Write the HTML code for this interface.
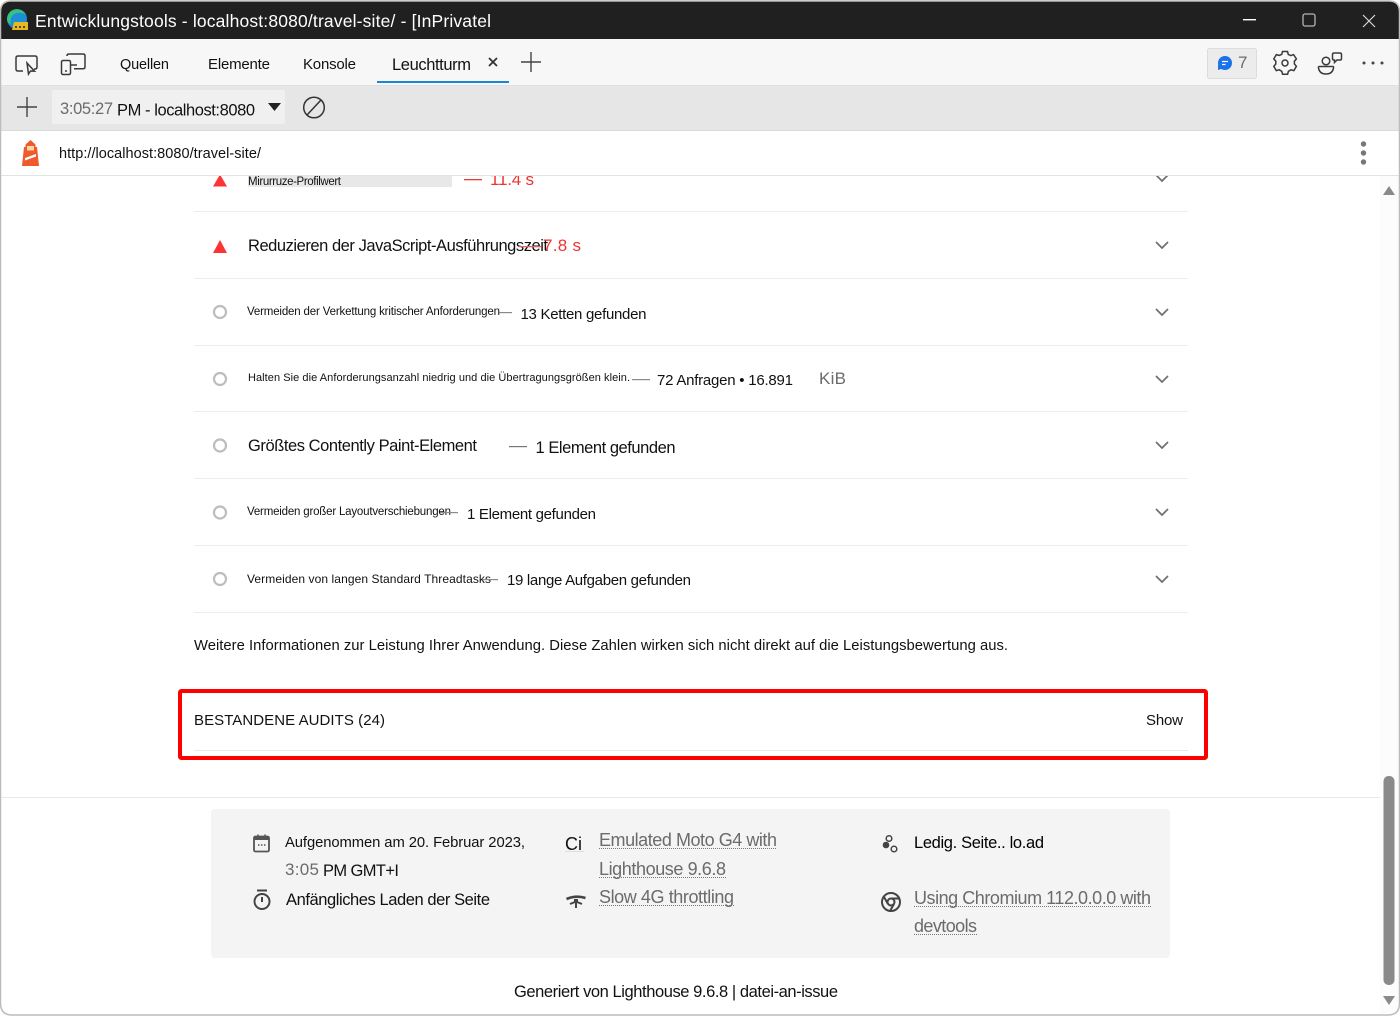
<!DOCTYPE html>
<html lang="de"><head><meta charset="utf-8"><title>Entwicklungstools</title>
<style>
html,body{margin:0;padding:0;width:1400px;height:1016px;overflow:hidden;background:#fff}
svg{display:block;position:absolute;left:0;top:0}
text{font-family:"Liberation Sans",Arial,sans-serif;fill:#111;white-space:pre}
.g{fill:#6b6b6b}
.i{fill:none;stroke:#3a3a3a;stroke-width:1.5}
</style></head><body>
<svg width="1400" height="1016" viewBox="0 0 1400 1016" xmlns="http://www.w3.org/2000/svg">
<rect width="1400" height="1016" fill="#fff"/>
<!-- title bar -->
<path d="M0 39V12Q0 1 11 1H1389Q1399 1 1399 12V39Z" fill="#202020"/>
<rect x="0" y="39" width="1399" height="46" fill="#f7f7f7"/>
<rect x="0" y="85" width="1399" height="45" fill="#e6e6e6"/>
<rect x="0" y="85" width="1399" height="1" fill="#e0e0e0"/>
<rect x="0" y="130" width="1399" height="1" fill="#dadada"/>
<rect x="0" y="175" width="1399" height="1" fill="#e3e3e3"/>
<!-- edge logo -->
<circle cx="17" cy="19" r="10" fill="#1b8fd8"/>
<path d="M7 19a10 10 0 0 1 19-4c-4-3-10-3-13 0-2 2-3 5-2 9-3-1-4-2-4-5z" fill="#35c47a"/>
<path d="M14 22h14v8H12z" fill="#e8b820"/>
<path d="M15 27h2M19 27h2M23 27h2" stroke="#222" stroke-width="1.400"/>
<text x="35" y="27" font-size="17.500" fill="#fff" style="fill:#fff" textLength="456" lengthAdjust="spacing">Entwicklungstools - localhost:8080/travel-site/ - [InPrivatel</text>
<!-- window controls -->
<rect x="1243" y="19" width="13" height="1.400" fill="#fff"/>
<rect x="1303" y="14" width="12" height="12" rx="2" fill="none" stroke="#b5b5b5" stroke-width="1.300"/>
<path d="M1363 15l12 12M1375 15l-12 12" stroke="#d8d8d8" stroke-width="1.200" fill="none"/>
<!-- tab icons -->
<path d="M23 71h-5q-2 0-2-2V58q0-2 2-2h17q2 0 2 2v9q0 2-2 2h-1" class="i"/>
<path d="M27 63l1.500 11 2-3 4 .2z" class="i" stroke-width="1.300"/>
<rect x="61.500" y="60.500" width="9" height="14" rx="1.500" class="i"/>
<path d="M67 56v-.2q0-1.800 2-1.800h14q2 0 2 1.800v11q0 2-2 2h-9M71 65h6" class="i"/>
<circle cx="66" cy="71" r="1" fill="#3a3a3a"/>
<text x="120" y="69" font-size="14.500" textLength="49" lengthAdjust="spacing">Quellen</text>
<text x="208" y="69" font-size="15" textLength="62" lengthAdjust="spacing">Elemente</text>
<text x="303" y="69" font-size="15" textLength="53" lengthAdjust="spacing">Konsole</text>
<text x="392" y="70" font-size="16.500" textLength="79" lengthAdjust="spacing">Leuchtturm</text>
<path d="M489 58l8 8M497 58l-8 8" stroke="#333" stroke-width="1.800"/>
<path d="M531 52v20M521 62h20" stroke="#444" stroke-width="1.400"/>
<rect x="377" y="81" width="132" height="2" fill="#1a86d8"/>
<!-- right tab bar -->
<rect x="1207.500" y="48.500" width="49" height="30" rx="2" fill="#ececec" stroke="#dcdcdc"/>
<circle cx="1225" cy="63" r="7" fill="#1a73e8"/>
<path d="M1218 65v5l6-2z" fill="#1a73e8"/>
<path d="M1222 61.500h6M1222 64.500h3.500" stroke="#fff" stroke-width="1.200"/>
<text x="1238" y="68" font-size="17" class="g">7</text>
<g transform="translate(1285 63)" fill="none" stroke="#3a3a3a" stroke-width="1.500">
<path d="M-2.500-11.500h5l.8 3 2.500 1.100 2.800-1 2.800 4.300-2 2.300v2.800l2 2.300-2.500 4.300-3-.8-2.500 1.500-.8 3h-5l-.8-3-2.500-1.500-3 .8-2.500-4.300 2-2.300v-2.800l-2-2.300 2.500-4.300 3 .8 2.500-1.100z"/>
<circle r="3"/>
</g>
<circle cx="1326" cy="61" r="3.800" class="i"/>
<path d="M1319.500 66.500h13q1.500 0 1 1.500-1 6-7.500 6t-7.500-6q-.5-1.500 1-1.500z" class="i"/>
<path d="M1334 53h6q1.500 0 1.500 1.500v4q0 1.500-1.500 1.500h-3l-2.500 2.500V60h-.5q-1.500 0-1.500-1.500v-4q0-1.500 1.500-1.500z" class="i"/>
<circle cx="1364" cy="63" r="1.500" fill="#444"/><circle cx="1373" cy="63" r="1.500" fill="#444"/><circle cx="1382" cy="63" r="1.500" fill="#444"/>
<!-- toolbar -->
<path d="M27 97v20M17 107h20" stroke="#444" stroke-width="1.400"/>
<rect x="52" y="90" width="233" height="34" rx="2" fill="#f0f0f0"/>
<text x="60" y="114" font-size="16.500" class="g" textLength="53" lengthAdjust="spacing">3:05:27</text>
<text x="117" y="115.500" font-size="16.500" textLength="138" lengthAdjust="spacing">PM - localhost:8080</text>
<path d="M268 103h13l-6.500 8z" fill="#222"/>
<circle cx="314" cy="107.500" r="10.300" fill="none" stroke="#333" stroke-width="1.500"/>
<path d="M307 115l14-15" stroke="#333" stroke-width="1.500"/>
<!-- url row -->
<path d="M30.500 140l5 4.500v2.500h1.500l2 19H22l2-19h1.500v-2.500z" fill="#ee5a2c"/>
<rect x="27" y="146" width="7" height="4.500" fill="#fbd7a0"/>
<path d="M25 158l11-4v2.500l-11 4z" fill="#fff"/>
<text x="59" y="158" font-size="14.500" textLength="202" lengthAdjust="spacing">http://localhost:8080/travel-site/</text>
<circle cx="1363.500" cy="144" r="2.700" fill="#777"/><circle cx="1363.500" cy="153" r="2.700" fill="#777"/><circle cx="1363.500" cy="162" r="2.700" fill="#777"/>

<!-- audit rows: clipped first -->
<svg x="0" y="176" width="1380" height="40" viewBox="0 176 1380 40">
<rect x="248" y="175" width="204" height="12" fill="#e8e8e8"/>
<path d="M213 186.500l7-12 7 12z" fill="#f33"/>
<text x="248" y="185" font-size="11.500" textLength="93" lengthAdjust="spacing">Mirurruze-Profilwert</text>
<rect x="464" y="179" width="18" height="1.300" fill="#eb3a3a"/>
<text x="490" y="185" font-size="17" style="fill:#e33" textLength="44" lengthAdjust="spacing">11.4 s</text>
<path d="M1156 175l6 6 6-6" fill="none" stroke="#6f6f6f" stroke-width="1.700"/>
</svg>
<g fill="#ececec">
<rect x="194" y="211" width="994" height="1"/>
<rect x="194" y="278" width="994" height="1"/>
<rect x="194" y="345" width="994" height="1"/>
<rect x="194" y="411" width="994" height="1"/>
<rect x="194" y="478" width="994" height="1"/>
<rect x="194" y="545" width="994" height="1"/>
<rect x="194" y="612" width="994" height="1"/>
</g>
<path d="M213 253l7-13 7 13z" fill="#f33"/>
<text x="248" y="251" font-size="16.500" textLength="300" lengthAdjust="spacing">Reduzieren der JavaScript-Ausführungszeit</text>
<rect x="519" y="246" width="22" height="1.300" fill="#d66"/>
<text x="543" y="251" font-size="17" style="fill:#e33" textLength="38" lengthAdjust="spacing">7.8 s</text>

<g fill="none" stroke="#bdbdbd" stroke-width="2.200">
<circle cx="220" cy="312" r="6"/><circle cx="220" cy="379" r="6"/><circle cx="220" cy="445.500" r="6"/>
<circle cx="220" cy="512.500" r="6"/><circle cx="220" cy="579" r="6"/>
</g>
<text x="247" y="315" font-size="11.500" textLength="253" lengthAdjust="spacing">Vermeiden der Verkettung kritischer Anforderungen</text>
<rect x="499" y="312" width="13" height="1.200" fill="#8a8a8a"/>
<text x="520.500" y="319" font-size="15" textLength="126" lengthAdjust="spacing">13 Ketten gefunden</text>

<text x="248" y="381" font-size="11" textLength="382" lengthAdjust="spacing">Halten Sie die Anforderungsanzahl niedrig und die Übertragungsgrößen klein.</text>
<rect x="632" y="379" width="18" height="1.200" fill="#8a8a8a"/>
<text x="657" y="385" font-size="15" textLength="136" lengthAdjust="spacing">72 Anfragen • 16.891</text>
<text x="819" y="384" font-size="17" class="g" textLength="27" lengthAdjust="spacing">KiB</text>

<text x="248" y="451" font-size="16.500" textLength="229" lengthAdjust="spacing">Größtes Contently Paint-Element</text>
<rect x="509" y="446" width="18" height="1.200" fill="#777"/>
<text x="535.500" y="453" font-size="16.500" textLength="140" lengthAdjust="spacing">1 Element gefunden</text>

<text x="247" y="515" font-size="11.500" textLength="204" lengthAdjust="spacing">Vermeiden großer Layoutverschiebungen</text>
<rect x="440" y="512" width="18" height="1.200" fill="#8a8a8a"/>
<text x="467" y="519" font-size="15" textLength="129" lengthAdjust="spacing">1 Element gefunden</text>

<text x="247" y="583" font-size="12" textLength="244" lengthAdjust="spacing">Vermeiden von langen Standard Threadtasks</text>
<rect x="482" y="579" width="16" height="1.200" fill="#8a8a8a"/>
<text x="507" y="585" font-size="15" textLength="184" lengthAdjust="spacing">19 lange Aufgaben gefunden</text>

<g fill="none" stroke="#6f6f6f" stroke-width="1.700">
<path d="M1156 242l6 6 6-6"/><path d="M1156 309l6 6 6-6"/><path d="M1156 376l6 6 6-6"/>
<path d="M1156 442l6 6 6-6"/><path d="M1156 509l6 6 6-6"/><path d="M1156 576l6 6 6-6"/>
</g>

<text x="194" y="650" font-size="14.800" textLength="814" lengthAdjust="spacing">Weitere Informationen zur Leistung Ihrer Anwendung. Diese Zahlen wirken sich nicht direkt auf die Leistungsbewertung aus.</text>

<!-- highlighted -->
<rect x="180" y="691" width="1026" height="67" rx="1.500" fill="none" stroke="#f00" stroke-width="4"/>
<text x="194" y="725" font-size="15" textLength="191" lengthAdjust="spacing">BESTANDENE AUDITS (24)</text>
<text x="1146" y="725" font-size="15" textLength="37" lengthAdjust="spacing">Show</text>
<rect x="194" y="750" width="994" height="1" fill="#e8e8e8"/>
<rect x="0" y="797" width="1380" height="1" fill="#e8e8e8"/>

<!-- footer panel -->
<rect x="211" y="809" width="959" height="149" rx="4" fill="#f4f4f4"/>
<rect x="254" y="836.500" width="15" height="15" rx="1.500" fill="none" stroke="#555" stroke-width="1.800"/>
<rect x="254" y="837" width="15" height="3" fill="#555"/>
<path d="M258 834.500v3M265 834.500v3M258 845h1.500M261 845h1.500M264 845h1.500" stroke="#555" stroke-width="1.500"/>
<text x="285" y="847" font-size="14.800" textLength="240" lengthAdjust="spacing">Aufgenommen am 20. Februar 2023,</text>
<text x="285" y="875" font-size="17" class="g" textLength="34" lengthAdjust="spacing">3:05</text>
<text x="323" y="876" font-size="16.500" textLength="76" lengthAdjust="spacing">PM GMT+I</text>
<circle cx="262" cy="901.500" r="7.500" fill="none" stroke="#444" stroke-width="2"/>
<path d="M257 890.500h10M262 897v5" stroke="#444" stroke-width="2"/>
<text x="286" y="905" font-size="16.500" textLength="204" lengthAdjust="spacing">Anfängliches Laden der Seite</text>

<text x="565" y="850" font-size="18" textLength="17" lengthAdjust="spacing">Ci</text>
<rect x="565" y="851" width="19" height="1" fill="#ddd"/>
<g class="g" font-size="18">
<text x="599" y="846" class="g" textLength="178" lengthAdjust="spacing">Emulated Moto G4 with</text>
<text x="599" y="875" class="g" textLength="127" lengthAdjust="spacing">Lighthouse 9.6.8</text>
<text x="599" y="903" class="g" textLength="135" lengthAdjust="spacing">Slow 4G throttling</text>
<text x="914" y="904" class="g" textLength="237" lengthAdjust="spacing">Using Chromium 112.0.0.0 with</text>
<text x="914" y="932" class="g" textLength="63" lengthAdjust="spacing">devtools</text>
</g>
<g stroke="#777" stroke-width="1" stroke-dasharray="1 1">
<path d="M599 848.500h178M599 877.500h127M599 905.500h135M914 906.500h237M914 934.500h63"/>
</g>
<path d="M566.500 899q9.500-4 19-1" fill="none" stroke="#444" stroke-width="2.600"/>
<path d="M570 904l5-2v-3M582 904l-5-2v-3M576 901v7" fill="none" stroke="#444" stroke-width="2"/>
<circle cx="886" cy="845" r="3.300" fill="#444"/>
<circle cx="889" cy="838.500" r="2.800" fill="none" stroke="#444" stroke-width="1.500"/>
<circle cx="894" cy="849" r="2.800" fill="none" stroke="#444" stroke-width="1.500"/>
<text x="914" y="848" font-size="16.500" style="fill:#000" textLength="130" lengthAdjust="spacing">Ledig. Seite.. lo.ad</text>
<g fill="none" stroke="#444" stroke-width="2">
<circle cx="891" cy="902" r="9"/><circle cx="891" cy="902" r="3.500"/>
<path d="M891 898.500h8.500M888 904l-4-7M894 904l-4 7"/>
</g>
<text x="514" y="997" font-size="16.500" textLength="324" lengthAdjust="spacing">Generiert von Lighthouse 9.6.8 | datei-an-issue</text>

<!-- scrollbar -->
<rect x="1380" y="176" width="19" height="838" fill="#fcfcfc"/>
<path d="M1383 195l6-9 6 9z" fill="#8a8a8a"/>
<rect x="1383.500" y="776" width="11" height="209" rx="5" fill="#8a8a8a"/>
<path d="M1383 996h12l-6 9z" fill="#8a8a8a"/>
<!-- window border -->
<path d="M.5 39V12Q.5 1 11 1H1389Q1399.500 1 1399.500 12V1003Q1399.500 1015 1388 1015H12Q.5 1015 .5 1003Z" fill="none" stroke="#bcbcbc" stroke-width="1.500"/>
</svg>
</body></html>
